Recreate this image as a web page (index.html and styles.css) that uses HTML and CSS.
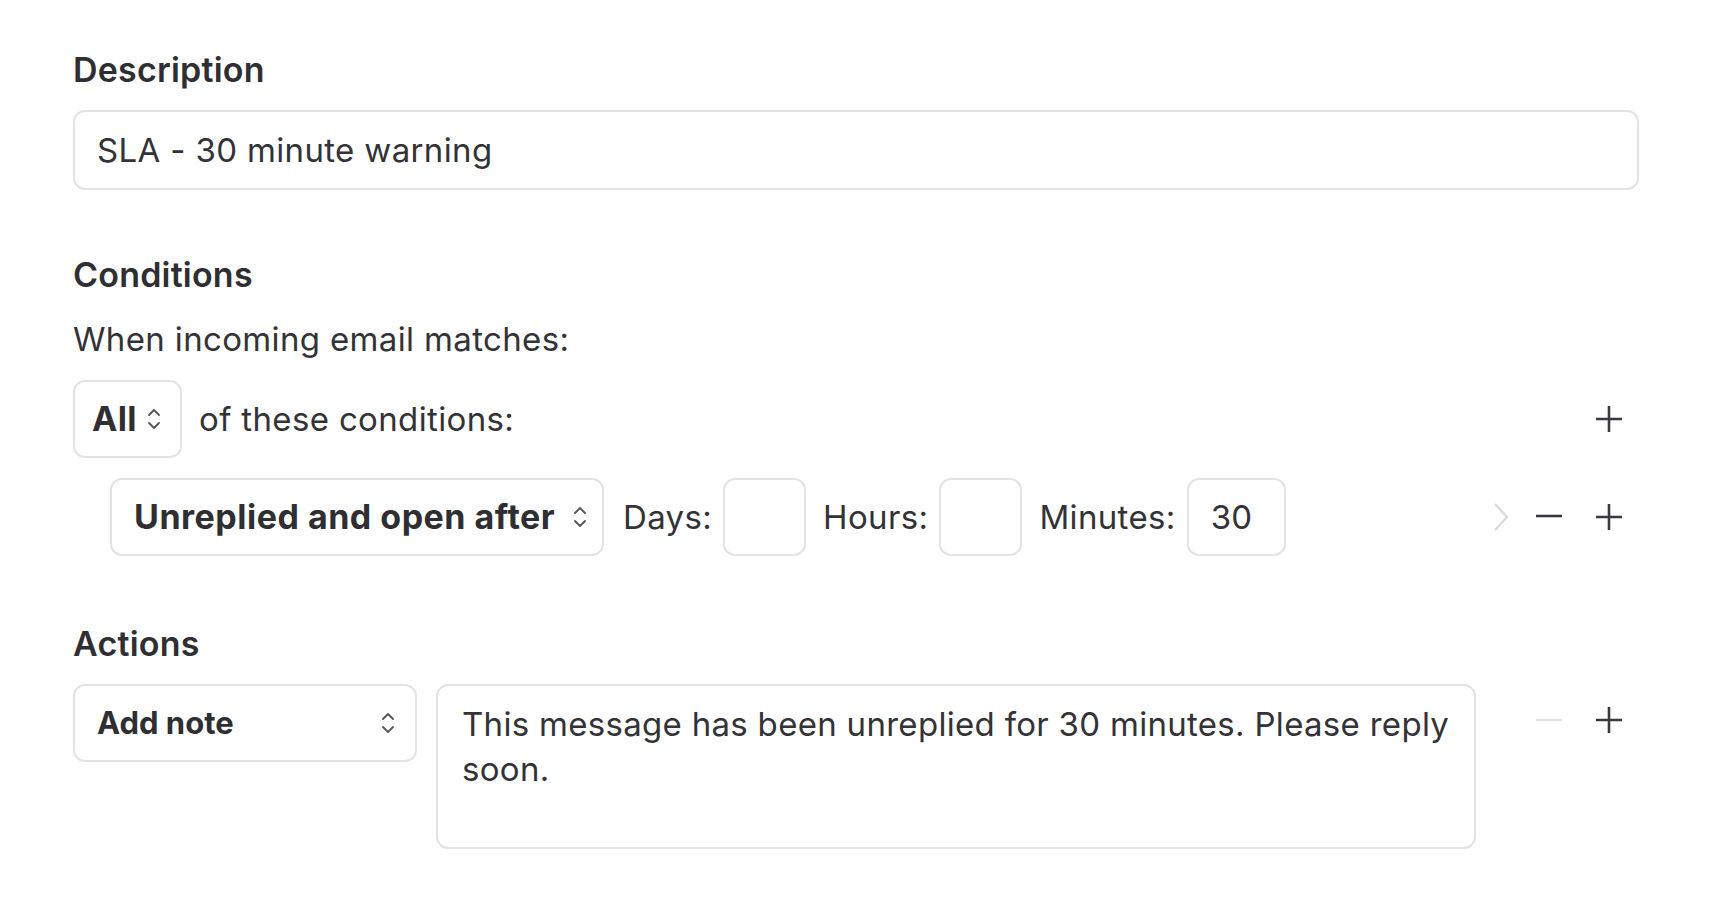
FILE: index.html
```html
<!DOCTYPE html>
<html lang="en">
<head>
<meta charset="utf-8">
<title>Rule editor</title>
<link rel="stylesheet" href="styles.css">
</head>
<body>
<main class="page">
  <section class="field">
    <h2 class="label">Description</h2>
    <div class="input">SLA - 30 minute warning</div>
  </section>

  <section class="field field-conditions">
    <h2 class="label">Conditions</h2>
    <p class="hint">When incoming email matches:</p>
    <div class="match-row">
      <div class="select select-all">
        <span>All</span>
        <svg class="updown" viewBox="0 0 14 24" width="14" height="24"><path d="M2 8 L7 3 L12 8 M2 16 L7 21 L12 16" fill="none" stroke="#555" stroke-width="1.8" stroke-linecap="round" stroke-linejoin="round"/></svg>
      </div>
      <span class="text">of these conditions:</span>
      <div class="row-tools">
        <button class="tool"><svg viewBox="0 0 28 28" width="28" height="28"><path d="M14 1 V27 M1 14 H27" stroke="#3a3a3e" stroke-width="2.6"/></svg></button>
      </div>
    </div>
    <div class="cond-row">
      <div class="select select-cond">
        <span>Unreplied and open after</span>
        <svg class="updown" viewBox="0 0 14 24" width="14" height="24"><path d="M2 8 L7 3 L12 8 M2 16 L7 21 L12 16" fill="none" stroke="#555" stroke-width="1.8" stroke-linecap="round" stroke-linejoin="round"/></svg>
      </div>
      <span class="text unit unit-first">Days:</span>
      <div class="num"></div>
      <span class="text unit">Hours:</span>
      <div class="num"></div>
      <span class="text unit">Minutes:</span>
      <div class="num num-wide">30</div>
      <div class="row-tools">
        <button class="tool tool-chevron"><svg viewBox="0 0 16 28" width="16" height="28"><path d="M2 1 L14 14 L2 27" fill="none" stroke="#dcdcdc" stroke-width="2.4"/></svg></button>
        <button class="tool tool-minus"><svg viewBox="0 0 28 28" width="28" height="28"><path d="M1 13 H27" stroke="#3a3a3e" stroke-width="2.6"/></svg></button>
        <button class="tool"><svg viewBox="0 0 28 28" width="28" height="28"><path d="M14 1 V27 M1 14 H27" stroke="#3a3a3e" stroke-width="2.6"/></svg></button>
      </div>
    </div>
  </section>

  <section class="field field-actions">
    <h2 class="label">Actions</h2>
    <div class="action-row">
      <div class="select select-action">
        <span>Add note</span>
        <svg class="updown" viewBox="0 0 14 24" width="14" height="24"><path d="M2 8 L7 3 L12 8 M2 16 L7 21 L12 16" fill="none" stroke="#555" stroke-width="1.8" stroke-linecap="round" stroke-linejoin="round"/></svg>
      </div>
      <div class="textarea">This message has been unreplied for 30 minutes. Please reply soon.</div>
      <div class="row-tools">
        <button class="tool tool-minus"><svg viewBox="0 0 28 28" width="28" height="28"><path d="M1 14 H27" stroke="#e4e4e4" stroke-width="2.4"/></svg></button>
        <button class="tool"><svg viewBox="0 0 28 28" width="28" height="28"><path d="M14 1 V27 M1 14 H27" stroke="#3a3a3e" stroke-width="2.6"/></svg></button>
      </div>
    </div>
  </section>
</main>
</body>
</html>
```

FILE: styles.css
```css
* { box-sizing: border-box; }

html, body {
  margin: 0;
  background: #ffffff;
}

body {
  font-family: Inter, "Noto Sans", "Liberation Sans", sans-serif;
  font-size: 33px;
  line-height: 40px;
  letter-spacing: 0.35px;
  color: #333337;
}

.page {
  padding: 50px 72px 0 73px;
}

.label {
  margin: 0;
  font-size: 34px;
  line-height: 40px;
  font-weight: 600;
  letter-spacing: 0.2px;
  color: #2f2f33;
}

.input {
  margin-top: 20px;
  height: 80px;
  border: 2px solid #e3e3e3;
  border-radius: 12px;
  padding: 0 22px;
  display: flex;
  align-items: center;
}

.field-conditions { margin-top: 65px; }
.field-actions { margin-top: 68px; }

.hint {
  margin: 24px 0 0;
}

.match-row,
.cond-row,
.action-row {
  display: flex;
  align-items: center;
}

.match-row { margin-top: 21px; }
.cond-row { margin-top: 20px; padding-left: 37px; }
.action-row { margin-top: 20px; align-items: flex-start; }

.select {
  display: flex;
  align-items: center;
  height: 78px;
  border: 2px solid #e3e3e3;
  border-radius: 12px;
  font-weight: 700;
  font-size: 34px;
  letter-spacing: 0.3px;
  color: #2f2f33;
}

.updown { flex: none; }

.select-all {
  width: 109px;
  padding: 0 14px 0 17px;
  gap: 10px;
}

.select-cond {
  width: 494px;
  padding: 0 15px 0 22px;
  letter-spacing: 0.5px;
  justify-content: space-between;
}

.select-action {
  width: 344px;
  padding: 0 20px 0 22px;
  font-size: 31px;
  letter-spacing: 0;
  justify-content: space-between;
}

.text { white-space: nowrap; }

.match-row .text { margin-left: 17px; }

.unit { margin: 0 11px 0 17px; }
.unit-first { margin-left: 19px; }

.num {
  width: 83px;
  height: 78px;
  border: 2px solid #e3e3e3;
  border-radius: 12px;
  padding: 0 22px;
  display: flex;
  align-items: center;
}

.num-wide { width: 99px; }

.textarea {
  margin-left: 19px;
  width: 1040px;
  height: 165px;
  border: 2px solid #e3e3e3;
  border-radius: 12px;
  padding: 16px 16px 16px 24px;
  line-height: 45px;
  letter-spacing: 0.3px;
}

.row-tools {
  margin-left: auto;
  display: flex;
  align-items: center;
  gap: 28px;
  padding-right: 14px;
}

.action-row .row-tools { margin-top: 20px; }

.tool {
  border: 0;
  background: none;
  padding: 0;
  margin: 0;
  display: flex;
  align-items: center;
  justify-content: center;
  width: 32px;
  height: 32px;
}

.tool-chevron { width: 16px; margin-right: -4px; }
```
